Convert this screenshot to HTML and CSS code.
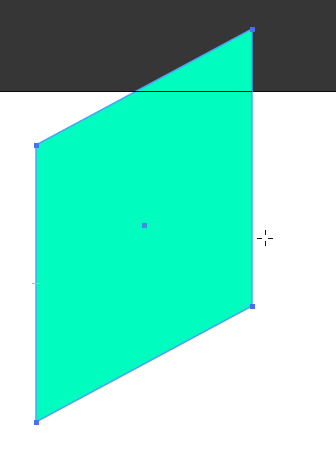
FILE: index.html
```html
<!DOCTYPE html>
<html>
<head>
<meta charset="utf-8">
<link rel="stylesheet" href="styles.css">
</head>
<body>
<div class="stage">
  <div class="band"></div>
  <div class="canvas"></div>
  <svg class="art" width="336" height="452" viewBox="0 0 336 452">
    <polygon points="252,29 252,306 36,422 36,145" fill="#00fdbf" stroke="#4aa6f2" stroke-width="1.5"/>
    <line x1="0" y1="91.5" x2="252" y2="91.5" stroke="#0a0a0a" stroke-width="1"/>
    <rect x="250" y="27" width="5" height="5" fill="#4b6ef2"/>
    <rect x="250" y="304" width="5" height="5" fill="#4b6ef2"/>
    <rect x="34" y="420" width="5" height="5" fill="#4b6ef2"/>
    <rect x="34" y="143" width="5" height="5" fill="#4b6ef2"/>
    <rect x="142" y="223" width="5" height="5" fill="#3f8de0"/>
    <line x1="32" y1="283.5" x2="40" y2="283.5" stroke="#7fd9c4" stroke-width="1"/>
    <g class="cursor">
      <g stroke="#fff" stroke-width="3">
        <line x1="256" y1="238.5" x2="262" y2="238.5"/>
        <line x1="268" y1="238.5" x2="274" y2="238.5"/>
        <line x1="265.5" y1="229" x2="265.5" y2="235"/>
        <line x1="265.5" y1="241" x2="265.5" y2="247"/>
      </g>
      <g stroke="#111" stroke-width="1">
        <line x1="257" y1="238.5" x2="262" y2="238.5"/>
        <line x1="268" y1="238.5" x2="273" y2="238.5"/>
        <line x1="265.5" y1="230" x2="265.5" y2="235"/>
        <line x1="265.5" y1="241" x2="265.5" y2="246"/>
      </g>
    </g>
  </svg>
</div>
</body>
</html>
```
FILE: styles.css
```css
html, body {
  margin: 0;
  padding: 0;
  background: #ffffff;
}
.stage {
  position: relative;
  width: 336px;
  height: 452px;
  overflow: hidden;
  display: flex;
  flex-direction: column;
}
.band {
  height: 91px;
  background: #363636;
  border-bottom: 1px solid #0a0a0a;
}
.canvas {
  flex: 1;
  background: #ffffff;
}
.art {
  position: absolute;
  left: 0;
  top: 0;
}
```
